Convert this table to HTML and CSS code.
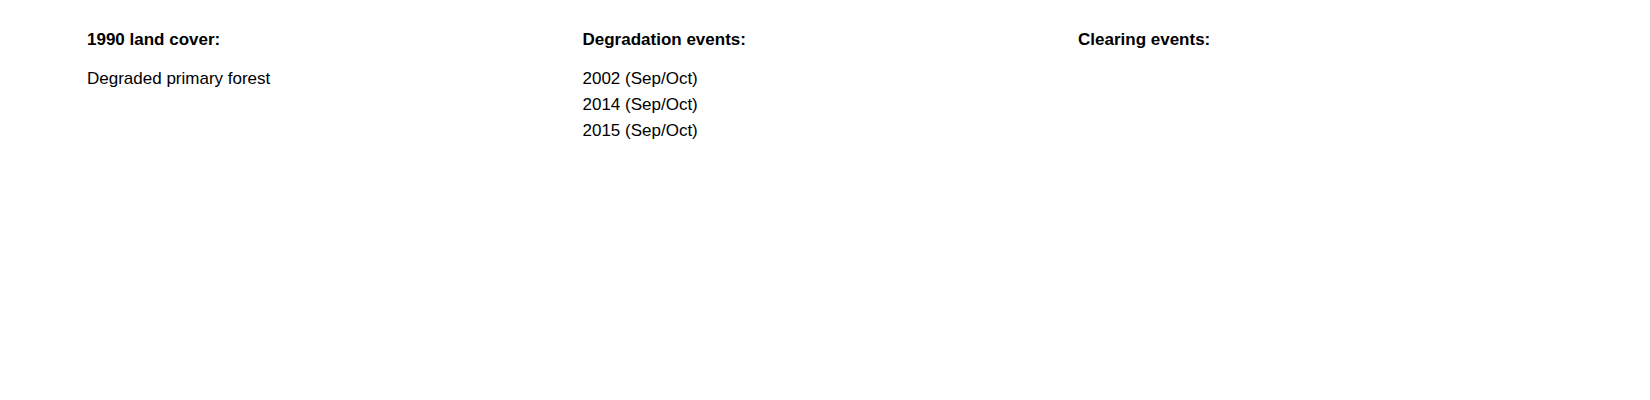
FILE: index.html
```html
<!DOCTYPE html>
<html lang="en">
<head>
<meta charset="utf-8">
<title>Land cover events</title>
<link rel="stylesheet" href="styles.css">
</head>
<body>
<div class="summary">
  <section class="col">
    <h3 class="col-title">1990 land cover:</h3>
    <ul class="items">
      <li>Degraded primary forest</li>
    </ul>
  </section>
  <section class="col">
    <h3 class="col-title">Degradation events:</h3>
    <ul class="items">
      <li>2002 (Sep/Oct)</li>
      <li>2014 (Sep/Oct)</li>
      <li>2015 (Sep/Oct)</li>
    </ul>
  </section>
  <section class="col">
    <h3 class="col-title">Clearing events:</h3>
    <ul class="items"></ul>
  </section>
</div>
</body>
</html>
```

FILE: styles.css
```css
html, body {
  margin: 0;
  padding: 0;
  background: #ffffff;
}
body {
  font-family: "Liberation Sans", Arial, sans-serif;
  color: #000000;
  font-size: 17px;
}
.summary {
  display: grid;
  grid-template-columns: repeat(3, 495.5px);
  padding: 27px 0 0 87px;
}
.col-title {
  margin: 0 0 13px 0;
  font-size: 17px;
  font-weight: bold;
  line-height: 26px;
}
.items {
  list-style: none;
  margin: 0;
  padding: 0;
  line-height: 26px;
}
```
